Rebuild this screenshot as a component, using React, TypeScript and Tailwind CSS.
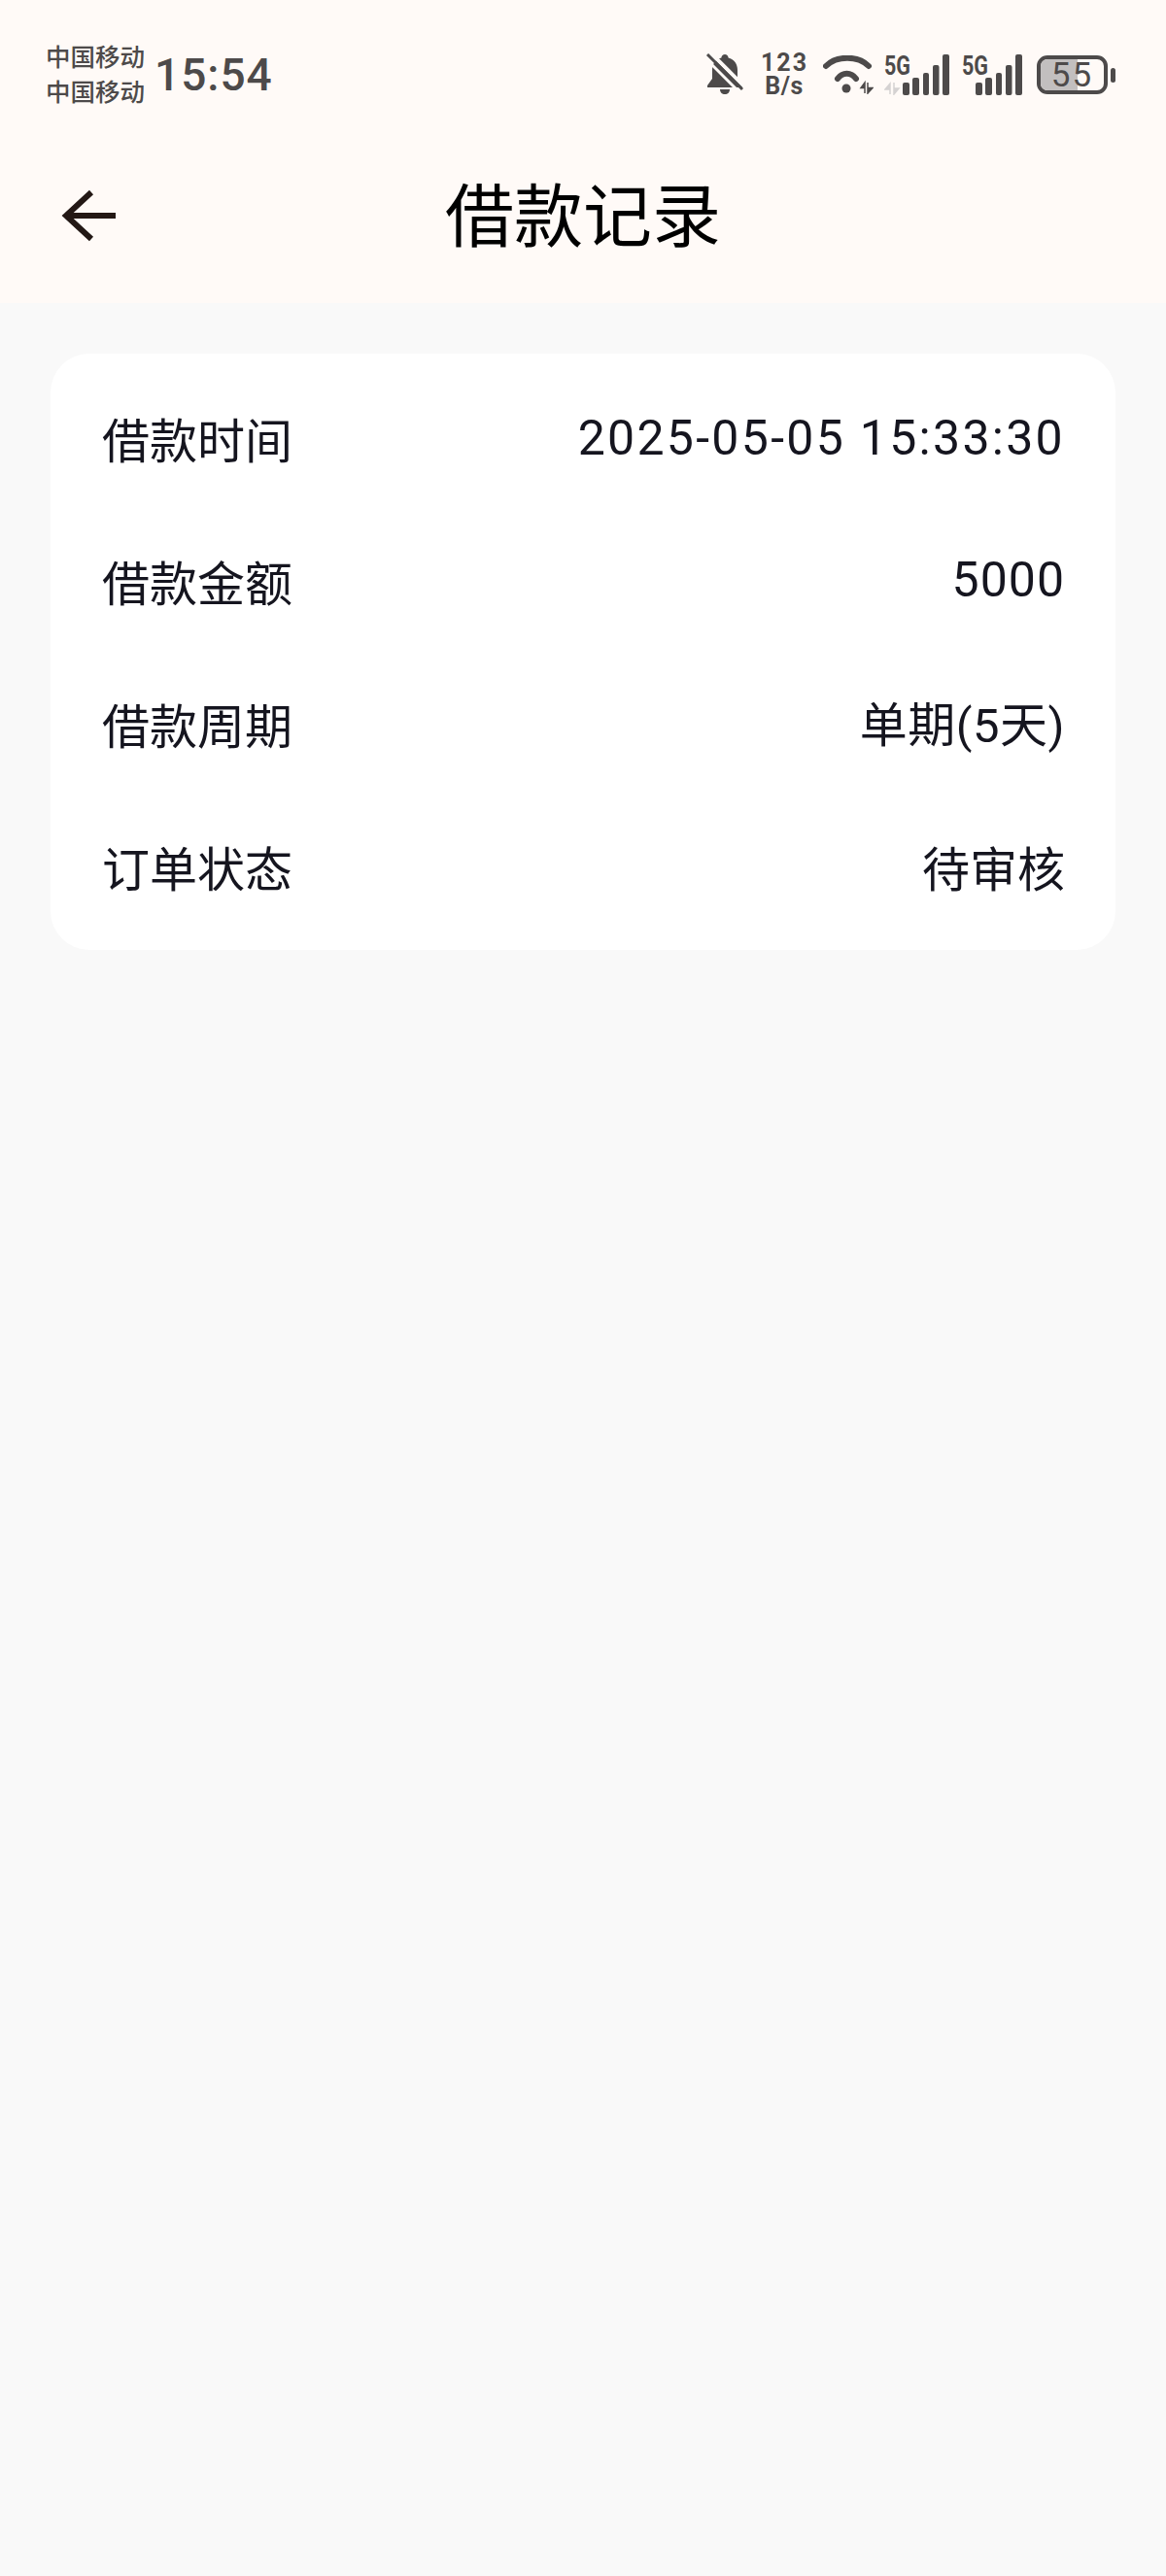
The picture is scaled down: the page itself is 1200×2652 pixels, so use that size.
const cjk = "font-['Roboto','Noto_Sans_CJK_SC',sans-serif]";

const rows = [
  { label: "借款时间", value: "2025-05-05 15:33:30", valueClass: "pb-[10px] text-[50px] tracking-[2.300px]" },
  { label: "借款金额", value: "5000", valueClass: "pb-[12px] text-[50px] tracking-[1px]" },
  { label: "借款周期", value: "单期(5天)", valueClass: "pb-[4px] tracking-[0.500px]" },
  { label: "订单状态", value: "待审核", valueClass: "" },
];

function BellOff() {
  return (
    <svg width="40" height="44" viewBox="0 0 40 44" fill="none">
      <path
        d="M20 1c2 0 3.400 1.500 3.600 3.500C29.500 6 33 11 33 17v9l5 7v2H2v-2l5-7v-9c0-6 3.500-11 9.400-12.500C16.600 2.500 18 1 20 1z"
        fill="#4d4a4a"
      />
      <path d="M15 37h10c0 3-2 5-5 5s-5-2-5-5z" fill="#4d4a4a" />
      <path d="M3 -3L43 37" stroke="#fffaf7" strokeWidth="4" />
      <path d="M2 1L38 37" stroke="#4d4a4a" strokeWidth="3" />
      <path d="M-1 4L35 40" stroke="#fffaf7" strokeWidth="3" />
    </svg>
  );
}

function Wifi() {
  return (
    <svg width="52" height="40" viewBox="0 0 52 40" fill="none">
      <path d="M3 11C14 0 36 0 47 11" stroke="#4d4a4a" strokeWidth="6" strokeLinecap="round" />
      <path d="M15 24C20 17 29 17 34 24" stroke="#4d4a4a" strokeWidth="6" strokeLinecap="round" />
      <circle cx="24" cy="34" r="4.500" fill="#4d4a4a" />
      <path d="M43 39V28l-4 5.500h4M46 28v11l5-5.500h-5" fill="#4d4a4a" stroke="#4d4a4a" strokeWidth="1.500" />
    </svg>
  );
}

function Signal({ arrows }: { arrows?: boolean }) {
  return (
    <svg
      className="-mt-[10px]"
      width={arrows ? 67 : 62}
      height="52"
      viewBox={arrows ? "0 -10 67 52" : "5 -10 62 52"}
      fill="none"
    >
      <text x={arrows ? 0 : 5} y="21" fontFamily="Roboto" fontWeight="700" fontSize="28" fill="#4d4a4a" textLength="27" lengthAdjust="spacingAndGlyphs">
        5G
      </text>
      {arrows && (
        <path d="M6 41V30l-5 6h5M10 29v12l5-6h-5" fill="#d5d2d2" stroke="#d5d2d2" strokeWidth="1.500" />
      )}
      <rect x="19" y="29" width="7" height="13" rx="2" fill="#4d4a4a" />
      <rect x="29" y="24" width="7" height="18" rx="2" fill="#4d4a4a" />
      <rect x="40" y="19" width="6" height="23" rx="2" fill="#4d4a4a" />
      <rect x="50" y="11" width="6.500" height="31" rx="2" fill="#4d4a4a" />
      <rect x="60" y="0" width="7" height="42" rx="2" fill="#4d4a4a" />
    </svg>
  );
}

function Battery() {
  return (
    <div className="flex items-center gap-[3px]">
      <div className="relative h-[40px] w-[73px] overflow-hidden rounded-[11px] border-[4px] border-[#4d4a4a]">
        <div className="absolute inset-y-0 left-0 w-[38px] bg-[#c2bfbf]" />
        <span className="relative flex h-full items-center justify-center font-['Roboto',sans-serif] text-[35px] leading-none tracking-[2px] text-[#4d4a4a]">
          55
        </span>
      </div>
      <div className="h-[15px] w-[5px] rounded-full bg-[#4d4a4a]" />
    </div>
  );
}

export default function App() {
  return (
    <div className={`min-h-[2652px] bg-[#f9f9f9] ${cjk}`}>
      <header className="h-[312px] bg-[#fffaf7]">
        <div className="flex h-[130px] items-center pl-[47px] pr-[52px] pt-[24px]">
          <div className="w-[103px] text-[25.500px] font-medium leading-[36px] text-[#4d4a4a]">
            <div>中国移动</div>
            <div>中国移动</div>
          </div>
          <span className="ml-[9px] text-[46px] font-medium leading-none tracking-[1px] text-[#4d4a4a]">15:54</span>
          <div className="ml-auto flex items-center">
            <BellOff />
            <div className="ml-[17px] w-[48px] text-center text-[25px] font-bold leading-[24px] text-[#4d4a4a]">
              <div className="tracking-[2px]">123</div>
              <div className="tracking-[0.500px]">B/s</div>
            </div>
            <div className="ml-[16px]">
              <Wifi />
            </div>
            <div className="ml-[11px]">
              <Signal arrows />
            </div>
            <div className="ml-[13px]">
              <Signal />
            </div>
            <div className="ml-[15px]">
              <Battery />
            </div>
          </div>
        </div>
        <div className="grid h-[182px] grid-cols-[1fr_auto_1fr] items-center pt-[4px]">
          <div className="pb-[3px] pl-[63px]">
            <svg width="58" height="54" viewBox="0 0 58 54" fill="none">
              <path d="M56 27H6M31 3L5 27l26 24" stroke="#231815" strokeWidth="6" />
            </svg>
          </div>
          <h1 className="text-[71px] font-normal leading-none text-black">借款记录</h1>
          <div />
        </div>
      </header>
      <main className="px-[52px] pt-[52px]">
        <section className="rounded-[40px] bg-white pb-[8px] pl-[53px] pr-[52px] pt-[18px]">
          {rows.map((row) => (
            <div key={row.label} className="flex h-[147px] items-center justify-between text-[49px] text-[#15151f]">
              <span className="leading-none">{row.label}</span>
              <span className={`leading-none ${row.valueClass}`}>{row.value}</span>
            </div>
          ))}
        </section>
      </main>
    </div>
  );
}
